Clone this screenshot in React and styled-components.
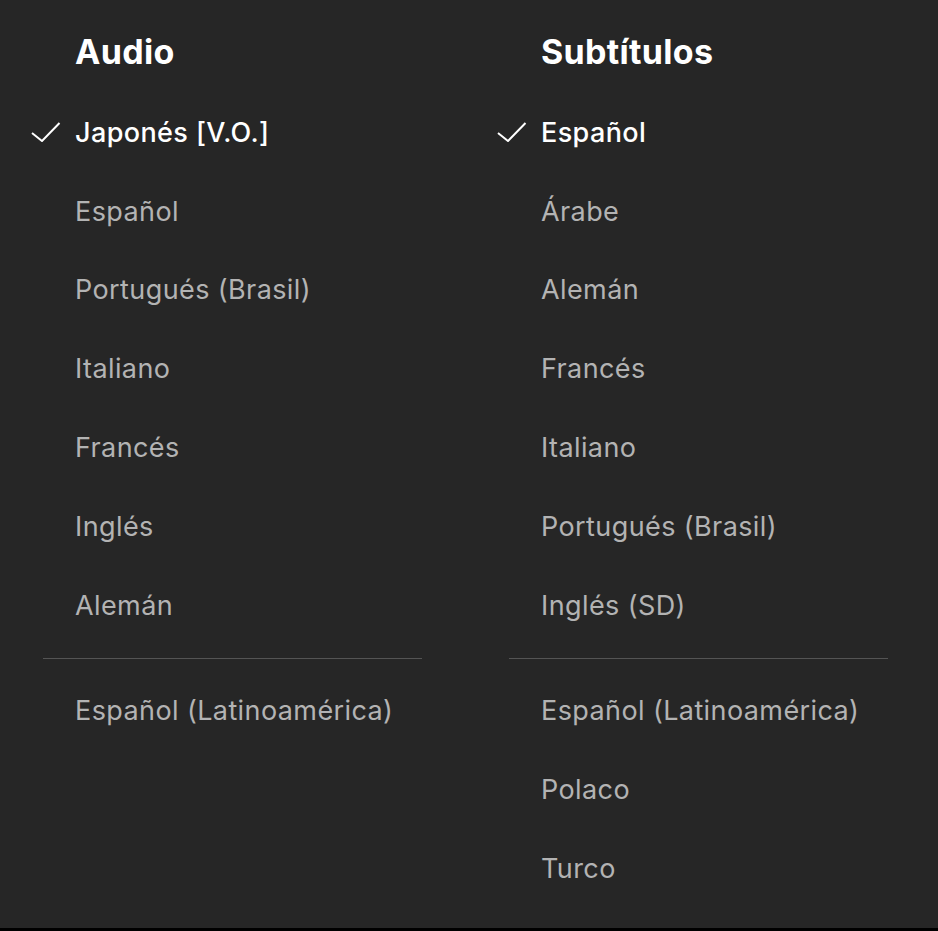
import React from 'react';
import styled, { createGlobalStyle } from 'styled-components';

const GlobalStyle = createGlobalStyle`
  html, body {
    margin: 0;
    padding: 0;
    background: #000000;
  }
`;

const Panel = styled.div`
  width: 938px;
  display: flex;
  background-color: #262626;
  padding: 32px 0 20px;
  font-family: "Inter", "Liberation Sans", sans-serif;
  box-sizing: border-box;
`;

const Column = styled.div`
  width: 466px;
  display: flex;
  flex-direction: column;
`;

const Heading = styled.h2`
  margin: 0 0 21px 75px;
  height: 40px;
  line-height: 40px;
  font-size: 34px;
  font-weight: 700;
  color: #ffffff;
  letter-spacing: 0.3px;
`;

const Row = styled.div`
  height: 78.8px;
  display: flex;
  align-items: center;
  color: ${({ $selected }) => ($selected ? '#ffffff' : '#b3b3b3')};
  font-size: 27px;
  font-weight: ${({ $selected }) => ($selected ? 500 : 400)};
  letter-spacing: 0.4px;
  cursor: pointer;
`;

const CheckCell = styled.span`
  width: 44px;
  margin-left: 31px;
  display: flex;
  align-items: center;
`;

const Divider = styled.hr`
  margin: 13px 0 13px 43px;
  width: 379px;
  border: 0;
  border-top: 1px solid #545454;
`;

const Check = () => (
  <svg width="30" height="20" viewBox="0 0 30 20" fill="none">
    <polyline points="1,11 11,19 28.5,1" stroke="#ffffff" strokeWidth="2" />
  </svg>
);

const LangList = ({ title, items, extra, selected }) => (
  <Column>
    <Heading>{title}</Heading>
    {items.map((item) => (
      <Row key={item} $selected={item === selected}>
        <CheckCell>{item === selected && <Check />}</CheckCell>
        {item}
      </Row>
    ))}
    <Divider />
    {extra.map((item) => (
      <Row key={item}>
        <CheckCell />
        {item}
      </Row>
    ))}
  </Column>
);

const App = () => (
  <>
    <GlobalStyle />
    <Panel>
      <LangList
        title="Audio"
        selected="Japonés [V.O.]"
        items={['Japonés [V.O.]', 'Español', 'Portugués (Brasil)', 'Italiano', 'Francés', 'Inglés', 'Alemán']}
        extra={['Español (Latinoamérica)']}
      />
      <LangList
        title="Subtítulos"
        selected="Español"
        items={['Español', 'Árabe', 'Alemán', 'Francés', 'Italiano', 'Portugués (Brasil)', 'Inglés (SD)']}
        extra={['Español (Latinoamérica)', 'Polaco', 'Turco']}
      />
    </Panel>
  </>
);

export default App;
